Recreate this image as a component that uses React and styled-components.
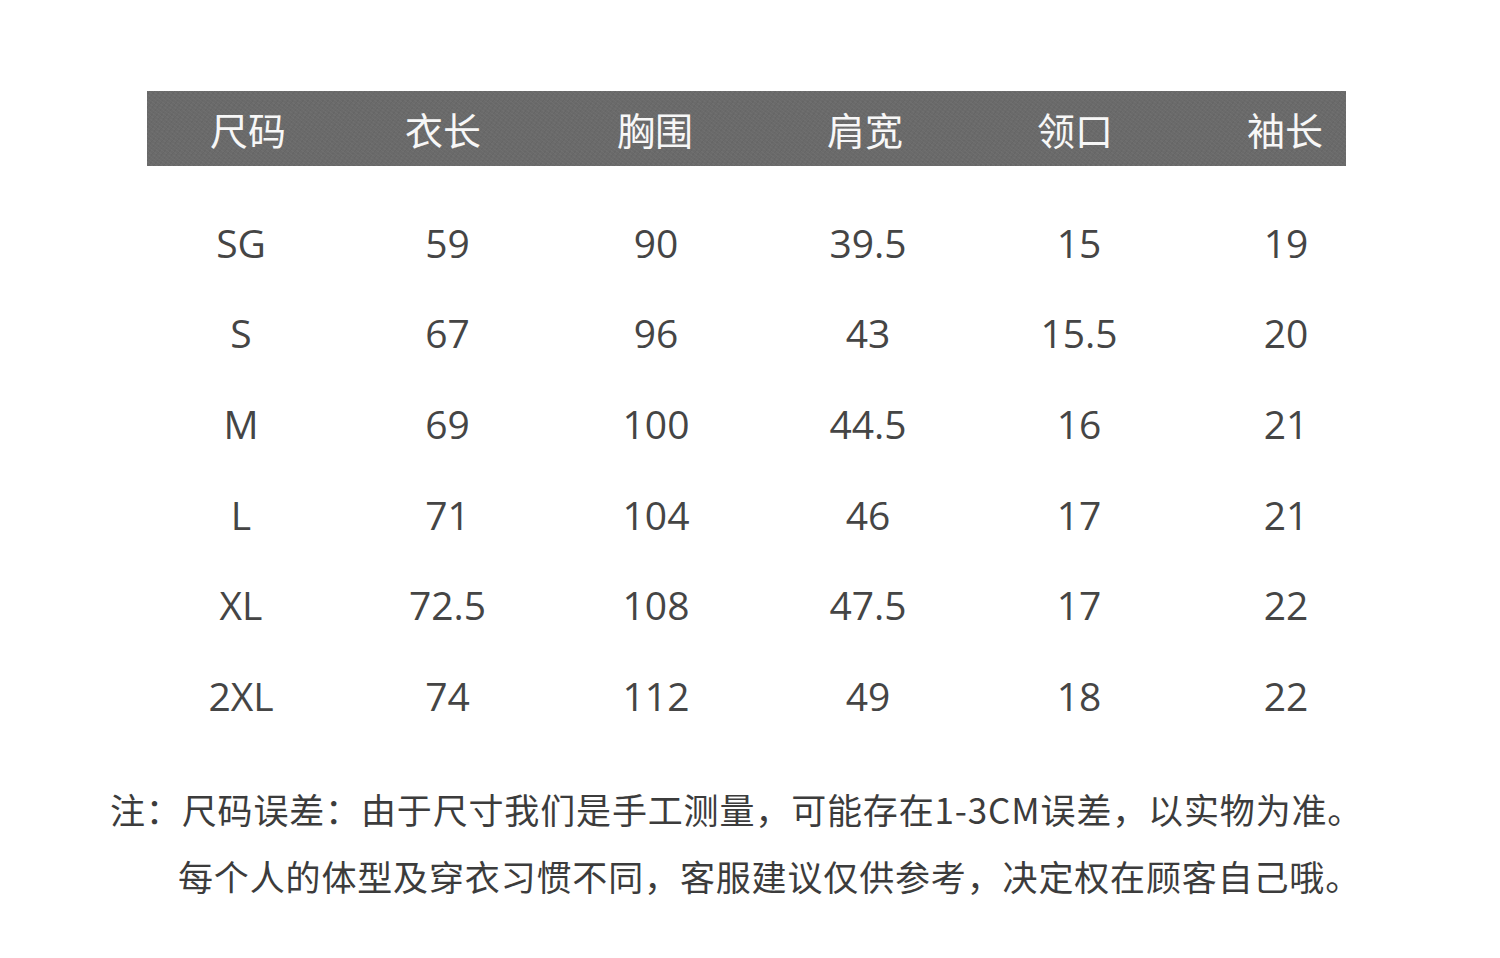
import React from "react";
import styled, { createGlobalStyle } from "styled-components";

const Global = createGlobalStyle`
  html, body { margin: 0; padding: 0; background: #ffffff; }
  body { font-family: "Open Sans", "Noto Sans CJK SC", sans-serif; }
`;

const Page = styled.div`
  width: 1500px;
  height: 958px;
  box-sizing: border-box;
  padding-top: 91px;
  display: flex;
  flex-direction: column;
  overflow: hidden;
`;

const HeaderBar = styled.div`
  margin-left: 147px;
  width: 1199px;
  height: 75px;
  background-color: #6a6a6a;
  background-image:
    repeating-linear-gradient(37deg, rgba(255,255,255,0.03) 0 1px, transparent 1px 3px),
    repeating-linear-gradient(-53deg, rgba(0,0,0,0.04) 0 1px, transparent 1px 4px);
  display: grid;
  grid-template-columns: 202px 188px 236px 184px 236px 184px;
  align-items: center;
  overflow: hidden;
`;

const HeadCell = styled.div`
  text-align: center;
  color: #f7f7f7;
  font-family: "Noto Sans CJK SC", sans-serif;
  font-size: 38px;
  font-weight: 400;
  line-height: 1;
  white-space: nowrap;
  padding-top: 1px;
`;

const Body = styled.div`
  margin-left: 138px;
  margin-top: 31px;
  display: flex;
  flex-direction: column;
`;

const Row = styled.div`
  display: grid;
  grid-template-columns: 206px 207px 210px 214px 208px 206px;
  height: 90.6px;
  align-items: center;
`;

const Cell = styled.div`
  text-align: center;
  color: #454545;
  font-family: "Open Sans", sans-serif;
  font-size: 39px;
  line-height: 1;
  white-space: nowrap;
`;

const Notes = styled.div`
  margin-top: 34px;
  display: flex;
  flex-direction: column;
  color: #3c3c3c;
  font-family: "Noto Sans CJK SC", sans-serif;
  font-size: 35px;
  letter-spacing: 0.85px;
  line-height: 67px;
  white-space: nowrap;
`;

const NoteLine = styled.div`
  padding-left: ${(p) => p.$indent}px;
`;

const headers = ["尺码", "衣长", "胸围", "肩宽", "领口", "袖长"];
const rows = [
  ["SG", "59", "90", "39.5", "15", "19"],
  ["S", "67", "96", "43", "15.5", "20"],
  ["M", "69", "100", "44.5", "16", "21"],
  ["L", "71", "104", "46", "17", "21"],
  ["XL", "72.5", "108", "47.5", "17", "22"],
  ["2XL", "74", "112", "49", "18", "22"],
];

export default function App() {
  return (
    <>
      <Global />
      <Page>
        <HeaderBar>
          {headers.map((h) => (
            <HeadCell key={h}>{h}</HeadCell>
          ))}
        </HeaderBar>
        <Body>
          {rows.map((r, i) => (
            <Row key={i}>
              {r.map((c, j) => (
                <Cell key={j}>{c}</Cell>
              ))}
            </Row>
          ))}
        </Body>
        <Notes>
          <NoteLine $indent={110}>注：尺码误差：由于尺寸我们是手工测量，可能存在1-3CM误差，以实物为准。</NoteLine>
          <NoteLine $indent={178}>每个人的体型及穿衣习惯不同，客服建议仅供参考，决定权在顾客自己哦。</NoteLine>
        </Notes>
      </Page>
    </>
  );
}
